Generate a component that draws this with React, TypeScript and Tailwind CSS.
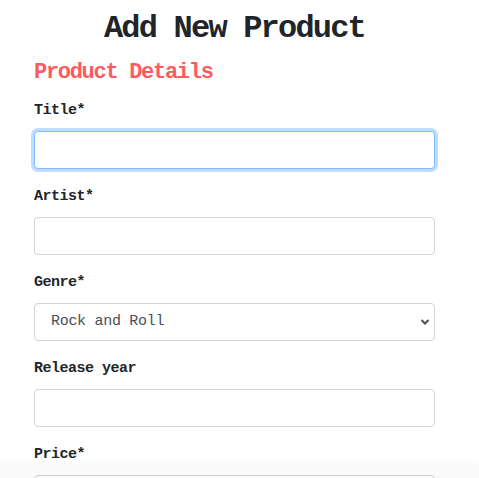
const fields = [
  { label: "Title*", type: "input", focused: true },
  { label: "Artist*", type: "input" },
  { label: "Genre*", type: "select" },
  { label: "Release year", type: "input" },
  { label: "Price*", type: "input" },
  { label: "Stock*", type: "input" },
];

const Field = ({ label, type, focused }: { label: string; type: string; focused?: boolean }) => {
  return (
    <div className="mb-4">
      <label className="block h-[24px] leading-[24px] mb-2 text-[15px] tracking-[-0.5px] font-bold text-[#212529]">
        {label}
      </label>
      {type === "select" ? (
        <div className="relative">
          <select className="w-full h-[38px] appearance-none rounded-[4px] border border-[#ced4da] bg-white pl-[16px] pr-8 text-[15px] tracking-[-0.3px] text-[#495057] outline-none">
            <option>Rock and Roll</option>
            <option>Jazz</option>
            <option>Blues</option>
          </select>
          <svg
            className="pointer-events-none absolute right-[5px] top-[15px]"
            width="10"
            height="8"
            viewBox="0 0 10 8"
          >
            <polyline points="1.5,2 5,5.5 8.5,2" fill="none" stroke="#495057" strokeWidth="2" />
          </svg>
        </div>
      ) : (
        <input
          className={
            focused
              ? "block w-full h-[38px] rounded-[4px] border border-[#80bdff] bg-white px-3 outline-none shadow-[0_0_0_3px_rgba(0,123,255,0.25)]"
              : "block w-full h-[38px] rounded-[4px] border border-[#ced4da] bg-white px-3 outline-none"
          }
        />
      )}
    </div>
  );
};

const App = () => {
  return (
    <div className="min-h-screen bg-white font-['Liberation_Mono','Courier_New',monospace]">
      <div className="ml-[34px] w-[401px] pt-[10px]">
        <h2 className="h-[38px] leading-[38px] text-center text-[32px] tracking-[-1.8px] font-bold text-[#212529]">
          Add New Product
        </h2>
        <h4 className="mt-[10px] leading-[30px] text-[22px] tracking-[-1.3px] font-bold text-[#ff5a5f]">
          Product Details
        </h4>
        <form className="mt-[11px]">
          {fields.map((f) => (
            <Field key={f.label} label={f.label} type={f.type} focused={f.focused} />
          ))}
        </form>
      </div>
      {/* bottom bar shadow */}
      <div className="pointer-events-none fixed inset-x-0 bottom-0 h-[14px] bg-[rgba(0,0,0,0.02)] shadow-[0_-2px_4px_rgba(0,0,0,0.025)]"></div>
    </div>
  );
};

export default App;
